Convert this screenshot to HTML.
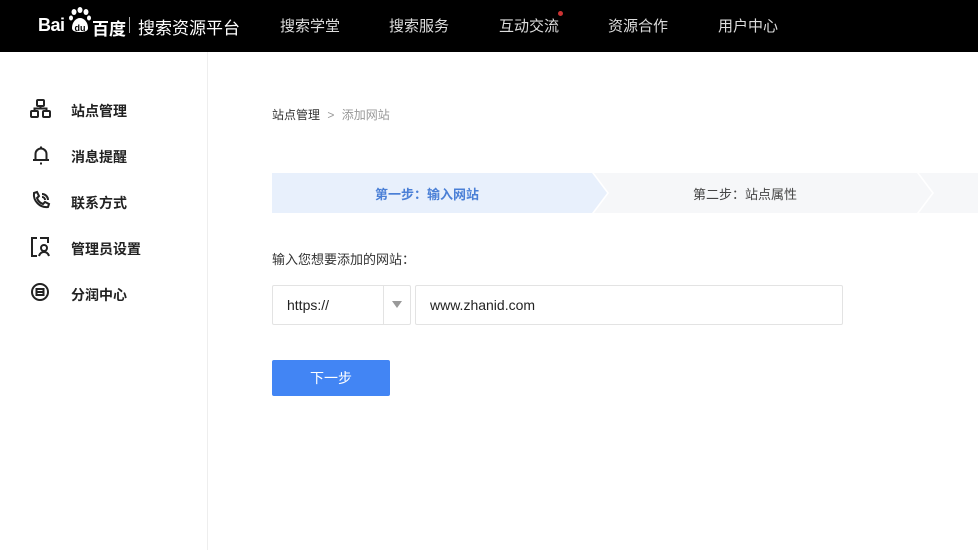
<!DOCTYPE html>
<html><head><meta charset="utf-8"><style>
*{margin:0;padding:0;box-sizing:border-box}
body{width:978px;height:550px;overflow:hidden;background:#fff;font-family:"Liberation Sans","Noto Sans CJK SC",sans-serif;position:relative}
.hd{position:absolute;left:0;top:0;width:978px;height:52px;background:#000}
.hd .t{position:absolute;top:15px;font-size:15px;color:#ddd}
.side{position:absolute;left:0;top:52px;width:208px;height:498px;border-right:1px solid #eee}
.it{position:absolute;left:71px;font-size:14px;font-weight:bold;color:#222}
.ic{position:absolute;left:30px}
.ab{position:absolute}
</style></head><body>
<div class="hd">
<div class="ab" style="left:38px;top:15px;color:#fff;font-weight:bold;font-size:18px;letter-spacing:-0.5px">Bai</div>
<svg class="ab" style="left:68px;top:6px" width="24" height="28" viewBox="0 0 24 28"><g fill="#fff"><ellipse cx="6" cy="6" rx="2.5" ry="3"/><ellipse cx="12" cy="4" rx="2.5" ry="3"/><ellipse cx="18" cy="6" rx="2.5" ry="3"/><ellipse cx="3" cy="12" rx="2" ry="2.5"/><ellipse cx="21" cy="12" rx="2" ry="2.5"/><path d="M4 22c0-6 4-10 8-10s8 4 8 10c0 3-3 4-8 4s-8-1-8-4z"/></g><text x="12" y="25" font-size="9" text-anchor="middle" fill="#000" font-weight="bold">du</text></svg>
<div class="ab" style="left:92px;top:15px;color:#fff;font-weight:bold;font-size:17px">百度</div>
<div class="ab" style="left:129px;top:17px;width:1px;height:16px;background:#aaa"></div>
<div class="ab" style="left:138px;top:14px;color:#fff;font-size:17px">搜索资源平台</div>
<div class="t" style="left:280px">搜索学堂</div>
<div class="t" style="left:389px">搜索服务</div>
<div class="t" style="left:499px">互动交流</div>
<div class="ab" style="left:558px;top:11px;width:5px;height:5px;border-radius:50%;background:#c33"></div>
<div class="t" style="left:608px">资源合作</div>
<div class="t" style="left:718px">用户中心</div>
</div>
<div class="side">
<svg class="ic" style="top:47px" width="22" height="20" viewBox="0 0 22 20" fill="none" stroke="#222" stroke-width="2"><rect x="7" y="1" width="7" height="6" rx="1"/><rect x="1" y="12" width="7" height="6" rx="1"/><rect x="13" y="12" width="7" height="6" rx="1"/><path d="M10.5 7v2.5M4.5 12V9.5h12V12"/></svg>
<div class="it" style="top:49px">站点管理</div>
<svg class="ic" style="top:92px" width="22" height="22" viewBox="0 0 22 22" fill="none" stroke="#222" stroke-width="2"><path d="M3 16h16M5.5 16V10a5.5 5.5 0 0 1 11 0v6M11 2.5v2M10 19.5h2"/></svg>
<div class="it" style="top:95px">消息提醒</div>
<svg class="ic" style="top:138px" width="22" height="22" viewBox="0 0 22 22" fill="none" stroke="#222" stroke-width="2"><path d="M4 3l3-1 2 4-2 2c1 3 3 5 6 6l2-2 4 2-1 3c-8 1-15-6-14-14z"/><path d="M12 4a6 6 0 0 1 6 6M12 7a3 3 0 0 1 3 3"/></svg>
<div class="it" style="top:141px">联系方式</div>
<svg class="ic" style="top:184px" width="22" height="22" viewBox="0 0 22 22" fill="none" stroke="#222" stroke-width="2"><path d="M7 2H2v18h5M10 2h8v5"/><circle cx="14" cy="12" r="3"/><path d="M9 20c1-3 3-4 5-4s4 1 5 4"/></svg>
<div class="it" style="top:187px">管理员设置</div>
<svg class="ic" style="top:230px" width="22" height="22" viewBox="0 0 22 22" fill="none" stroke="#222" stroke-width="2"><circle cx="10" cy="10" r="8"/><rect x="6.5" y="7" width="7" height="6"/><path d="M7 10h6"/></svg>
<div class="it" style="top:233px">分润中心</div>
</div>
<div class="ab" style="left:272px;top:106px;font-size:12px;color:#333">站点管理 <span style="color:#999;margin:0 4px">&gt;</span> <span style="color:#999">添加网站</span></div>
<svg class="ab" style="left:272px;top:173px" width="706" height="40"><polygon points="0,0 320,0 335,20 320,40 0,40" fill="#e8f0fc"/><polygon points="322,0 645,0 660,20 645,40 322,40 337,20" fill="#f6f7f9"/><polygon points="647,0 706,0 706,40 647,40 662,20" fill="#f6f7f9"/></svg>
<div class="ab" style="left:375px;top:184px;font-size:13px;font-weight:bold;color:#4a7fd6">第一步：输入网站</div>
<div class="ab" style="left:693px;top:184px;font-size:13px;color:#444">第二步：站点属性</div>
<div class="ab" style="left:272px;top:249px;font-size:13px;color:#333">输入您想要添加的网站：</div>
<div class="ab" style="left:272px;top:285px;width:139px;height:40px;border:1px solid #e3e3e3;border-radius:2px"></div>
<div class="ab" style="left:383px;top:285px;width:1px;height:40px;background:#e3e3e3"></div>
<div class="ab" style="left:287px;top:297px;font-size:14px;color:#222">https://</div>
<div class="ab" style="left:392px;top:301px;border-left:5px solid transparent;border-right:5px solid transparent;border-top:7px solid #999"></div>
<div class="ab" style="left:415px;top:285px;width:428px;height:40px;border:1px solid #e3e3e3;border-radius:2px"></div>
<div class="ab" style="left:430px;top:297px;font-size:14px;color:#222">www.zhanid.com</div>
<div class="ab" style="left:272px;top:360px;width:118px;height:36px;background:#4285f4;border-radius:2px;color:#fff;font-size:14px;text-align:center;line-height:36px">下一步</div>
</body></html>
